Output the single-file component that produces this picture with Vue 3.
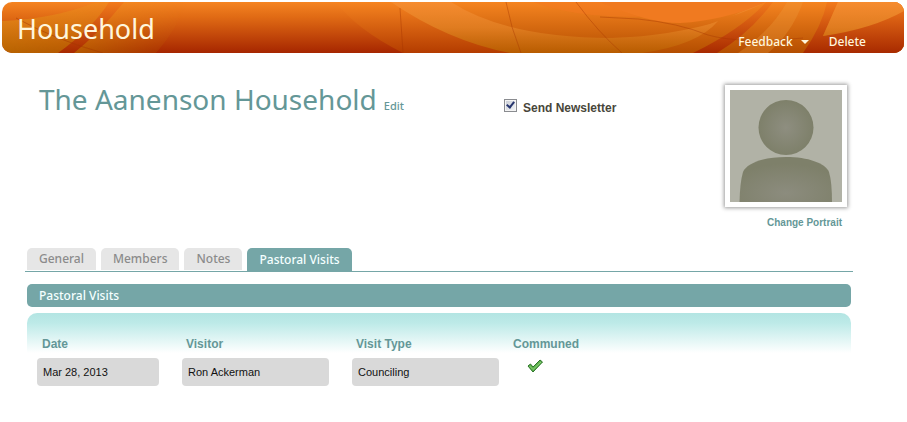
<script setup>
import { ref } from 'vue'

const newsletter = ref(true)
const activeTab = ref('Pastoral Visits')
const tabs = ['General', 'Members', 'Notes', 'Pastoral Visits']
const visits = [
  { date: 'Mar 28, 2013', visitor: 'Ron Ackerman', type: 'Counciling', communed: true },
]
</script>

<template>
  <div class="page">
    <header class="banner">
      <svg class="swirls" viewBox="0 0 902 51" preserveAspectRatio="none" aria-hidden="true">
        <defs>
          <linearGradient id="base" x1="0" y1="0" x2="0" y2="1">
            <stop offset="0" stop-color="#f58422" />
            <stop offset="0.3" stop-color="#e06a14" />
            <stop offset="1" stop-color="#a62600" />
          </linearGradient>
          <linearGradient id="warm" x1="0" y1="0" x2="0" y2="51" gradientUnits="userSpaceOnUse">
            <stop offset="0" stop-color="#f68420" />
            <stop offset="1" stop-color="#b43c00" />
          </linearGradient>
          <linearGradient id="gold" x1="0" y1="0" x2="0" y2="51" gradientUnits="userSpaceOnUse">
            <stop offset="0" stop-color="#f68c30" />
            <stop offset="0.5" stop-color="#e07c20" />
            <stop offset="1" stop-color="#b85c00" />
          </linearGradient>
          <linearGradient id="amber" x1="0" y1="0" x2="0" y2="51" gradientUnits="userSpaceOnUse">
            <stop offset="0" stop-color="#f58420" />
            <stop offset="1" stop-color="#b44e00" />
          </linearGradient>
          <linearGradient id="left" x1="0" y1="0" x2="0" y2="51" gradientUnits="userSpaceOnUse">
            <stop offset="0" stop-color="#f08a20" />
            <stop offset="0.4" stop-color="#dc7c14" />
            <stop offset="1" stop-color="#b86400" />
          </linearGradient>
          <linearGradient id="fade" x1="0" y1="0" x2="185" y2="0" gradientUnits="userSpaceOnUse">
            <stop offset="0" stop-color="#fff" />
            <stop offset="0.4" stop-color="#ccc" />
            <stop offset="1" stop-color="#000" />
          </linearGradient>
          <mask id="leftmask"><rect width="185" height="51" fill="url(#fade)" /></mask>
          <linearGradient id="rust" x1="0" y1="0" x2="0" y2="51" gradientUnits="userSpaceOnUse">
            <stop offset="0" stop-color="#f27a1c" />
            <stop offset="1" stop-color="#a82a00" />
          </linearGradient>
        </defs>
        <rect width="902" height="51" fill="url(#base)" />
        <path d="M0 19Q52 17 94 0H185Q175 27 154 51H0Z" fill="url(#left)" mask="url(#leftmask)" />
        <path d="M56 51Q92 25 107 0H122Q96 32 72 51Z" fill="url(#rust)" />
        <path d="M14 16Q54 38 101 51" fill="none" stroke="#a63800" stroke-opacity="0.5" />
        <path d="M334 0Q354 27 401 51H902V0Z" fill="url(#warm)" />
        <path d="M389 0Q446 39 508 51H700L775 0Z" fill="url(#gold)" />
        <path d="M449 0Q505 36 610 36Q670 34 722 18L760 0Z" fill="url(#amber)" />
        <path d="M532 0Q568 15 638 15L598 0Z" fill="#f47820" fill-opacity="0.5" />
        <path d="M598 0Q645 21 678 21Q724 18 764 0Z" fill="#f07a20" />
        <path d="M638 51Q690 38 716 17Q736 14 764 0H902V51Z" fill="url(#amber)" />
        <path d="M598 36Q674 37 716 19Q696 43 640 51H610Z" fill="url(#gold)" />
        <path d="M691 51Q740 27 764 0H771Q748 31 715 51Z" fill="url(#rust)" />
        <path d="M736 51Q769 29 785 0H801Q790 31 766 51Z" fill="#f0a040" fill-opacity="0.3" />
        <path d="M801 51Q820 24 825 0H836L821 34Q870 24 902 8V51Z" fill="url(#rust)" />
        <path d="M836 0L821 34Q870 27 902 9V0Z" fill="url(#gold)" />
        <g fill="none" stroke="#a63400" stroke-opacity="0.4">
          <path d="M398 6L401 51" />
          <path d="M504 0Q509 26 519 51" />
          <path d="M574 0Q596 30 620 51" />
          <path d="M598 15L636 17Q676 21 706 33Q738 42 801 36" />
        </g>
      </svg>
      <h1>Household</h1>
      <nav class="actions">
        <button type="button">Feedback <i class="caret"></i></button>
        <button type="button">Delete</button>
      </nav>
    </header>

    <section class="summary">
      <div class="title">
        <h2>The Aanenson Household</h2>
        <a href="#edit">Edit</a>
      </div>
      <label class="newsletter">
        <input v-model="newsletter" type="checkbox" />
        <span>Send Newsletter</span>
      </label>
      <div class="portrait">
        <svg class="photo" viewBox="0 0 112 112" role="img" aria-label="Portrait">
          <defs>
            <radialGradient id="head">
              <stop offset="0" stop-color="#8e8e80" />
              <stop offset="1" stop-color="#7e806a" />
            </radialGradient>
            <radialGradient id="body" cx="0.5" cy="0.8" r="0.65">
              <stop offset="0" stop-color="#8c8c7e" />
              <stop offset="1" stop-color="#7e806a" />
            </radialGradient>
          </defs>
          <rect width="112" height="112" fill="#b1b2a6" />
          <circle cx="56" cy="37.500" r="27.500" fill="url(#head)" />
          <path d="M9.500 112Q10 92 13 82C17 73 34 67 56 67S95 73 99 82Q102 92 102 112Z" fill="url(#body)" />
        </svg>
        <a href="#portrait">Change Portrait</a>
      </div>
    </section>

    <nav class="tabs">
      <button
        v-for="tab in tabs"
        :key="tab"
        type="button"
        :class="{ active: tab === activeTab }"
        @click="activeTab = tab"
      >{{ tab }}</button>
    </nav>

    <section class="panel">
      <h3>Pastoral Visits</h3>
      <div class="sheet">
        <table>
          <thead>
            <tr>
              <th class="date">Date</th>
              <th class="wide">Visitor</th>
              <th class="kind">Visit Type</th>
              <th class="mark">Communed</th>
            </tr>
          </thead>
          <tbody>
            <tr v-for="visit in visits" :key="visit.date">
              <td><div class="box">{{ visit.date }}</div></td>
              <td><div class="box">{{ visit.visitor }}</div></td>
              <td><div class="box last">{{ visit.type }}</div></td>
              <td class="tick">
                <svg v-if="visit.communed" width="16" height="14" viewBox="0 0 16 14" role="img" aria-label="Yes">
                  <path d="M1 7L3.500 5L6 8L13 1L15.500 3L6 13Z" fill="#5cb04c" stroke="#2c7428" />
                  <path d="M2.500 7L6 10.500L14 3" fill="none" stroke="#8cd078" />
                </svg>
              </td>
            </tr>
          </tbody>
        </table>
      </div>
    </section>
  </div>
</template>

<style>
body {
  background: #fff;
}
</style>

<style scoped>
.page {
  padding: 2px 3px 0 2px;
  font-family: "Trebuchet MS", "Noto Sans", sans-serif;
}
h1, h2, h3 {
  margin: 0;
  font-weight: 400;
}
button {
  border: 0;
  background: none;
  font: inherit;
  cursor: pointer;
}
a {
  color: #649797;
  text-decoration: none;
}
.banner {
  position: relative;
  display: flex;
  justify-content: space-between;
  height: 51px;
  border-radius: 10px;
  overflow: hidden;
}
.swirls {
  position: absolute;
  inset: 0;
  width: 100%;
  height: 100%;
}
.banner h1 {
  position: relative;
  padding-left: 15px;
  font-size: 27px;
  line-height: 54px;
  color: #fff6dc;
}
.actions {
  position: relative;
  display: flex;
  align-items: flex-end;
  gap: 20px;
  padding: 0 38px 2px 0;
}
.actions button {
  display: flex;
  align-items: center;
  gap: 8px;
  padding: 0;
  font-size: 12px;
  font-weight: 500;
  line-height: 18px;
  color: #fff6dc;
}
.caret {
  border: 4px solid transparent;
  border-top-color: #fff6dc;
  border-bottom: 0;
}
.summary {
  display: grid;
  grid-template-columns: 465px 1fr auto;
  align-items: start;
  padding: 30px 57px 0 37px;
}
.title {
  display: flex;
  align-items: baseline;
  gap: 7px;
}
.title h2 {
  font-size: 28px;
  line-height: 32px;
  color: #649797;
}
.title a {
  font-size: 11px;
  font-weight: 500;
}
.newsletter {
  display: flex;
  align-items: center;
  gap: 6px;
  padding-top: 16px;
  font: bold 12px/16px "Liberation Sans", sans-serif;
  color: #48463a;
}
.newsletter input {
  appearance: none;
  display: grid;
  width: 13px;
  height: 13px;
  margin: 0;
  margin-bottom: 4px;
  border: 1px solid #8a8c90;
  background: linear-gradient(135deg, #c8ccd4, #f4f6f8);
  box-shadow: inset 0 0 0 1px #f4f4f4;
}
.newsletter input:checked::after {
  content: "";
  width: 3px;
  height: 6px;
  margin: 0 0 0 3px;
  border: solid #26356e;
  border-width: 0 2px 2px 0;
  transform: rotate(38deg);
}
.portrait {
  display: flex;
  flex-direction: column;
  align-items: flex-end;
  gap: 9px;
  font: bold 10px/14px "Liberation Sans", sans-serif;
}
.photo {
  width: 112px;
  height: 112px;
  margin-top: 2px;
  border: 5px solid #fff;
  box-shadow: 0 0 4px 1px #9a9a9a;
}
.portrait a {
  margin-right: 5px;
}
.tabs {
  display: flex;
  align-items: flex-start;
  gap: 5px;
  margin: 18px 51px 0 23px;
  padding-left: 2px;
  border-bottom: 1px solid #75a6a7;
}
.tabs button {
  height: 22px;
  padding: 0 12px;
  border-radius: 5px 5px 0 0;
  background: #e6e6e6;
  color: #8b8b8b;
  font-size: 12px;
  font-weight: 500;
  line-height: 22px;
}
.tabs .active {
  height: 23px;
  background: #75a6a7;
  color: #f4ffff;
}
.panel {
  margin: 12px 53px 0 25px;
}
.panel h3 {
  padding-left: 12px;
  border-radius: 5px;
  background: #75a6a7;
  color: #f4ffff;
  font-size: 12px;
  font-weight: 500;
  line-height: 23px;
}
.sheet {
  margin-top: 6px;
  padding: 21px 10px 0;
  border-radius: 10px 10px 0 0;
  background: linear-gradient(#b3e5e3, #bdeae8 25%, #fff) no-repeat top / 100% 40px;
  font-family: "Liberation Sans", sans-serif;
}
table {
  width: 100%;
  border-collapse: collapse;
  table-layout: fixed;
}
th {
  padding: 0 0 3px 4px;
  text-align: left;
  font-size: 12px;
  line-height: 21px;
  color: #649797;
}
th.date {
  width: 140px;
  padding-left: 5px;
}
.wide {
  width: 166px;
}
.kind {
  width: 156px;
}
th.mark {
  padding-left: 1px;
}
td {
  padding: 0;
  vertical-align: top;
}
.box {
  margin-right: 23px;
  padding: 0 6px;
  border-radius: 4px;
  background: #d9d9d9;
  color: #111;
  font-size: 11px;
  line-height: 28px;
}
.box.last {
  margin-right: 13px;
}
.tick {
  padding: 1px 0 0 15px;
}
.tick svg {
  display: block;
}
</style>
